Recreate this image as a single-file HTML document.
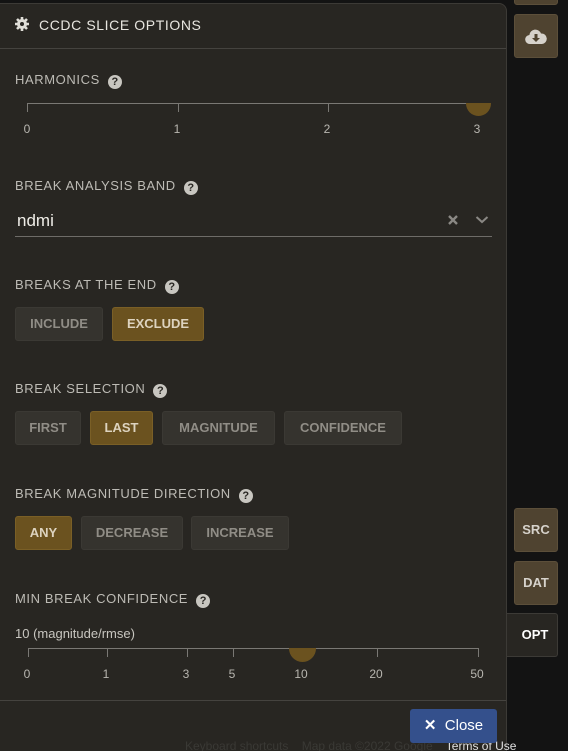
<!DOCTYPE html>
<html><head><meta charset="utf-8"><style>
*{margin:0;padding:0;box-sizing:border-box}
html,body{width:568px;height:751px;overflow:hidden}
body{background:#131313;font-family:"Liberation Sans",sans-serif;position:relative}
.panel{position:absolute;left:-2px;top:3px;width:509px;height:760px;background:#282622;border:1px solid #3c3a36;border-radius:0 8px 0 0}
.abs{position:absolute}
.lbl{position:absolute;left:15px;font-size:13px;color:#bdbbb5;letter-spacing:.6px;white-space:nowrap}
.q{display:inline-block;width:14px;height:14px;border-radius:50%;background:#c8c6c0;color:#282622;font-size:11px;font-weight:bold;text-align:center;line-height:14px;margin-left:8px;vertical-align:-1px;letter-spacing:0}
.btn{position:absolute;height:34px;background:#35332e;border:1px solid #3b3934;border-radius:3px;color:#908d86;font-size:13px;font-weight:bold;text-align:center;line-height:32px}
.sel{background:#6b521f;border-color:#7a5f26;color:#ddd3bf}
.tick{position:absolute;width:1px;height:9px;background:#7a7874}
.tl{position:absolute;font-size:12px;color:#b8b6b0;transform:translateX(-50%)}
.side{position:absolute;background:#4f4330;border:1px solid #5c4f3a;border-radius:3px;color:#d6d2cb;font-weight:bold;font-size:13px;text-align:center}
</style></head><body>
<div class="side" style="left:514px;top:-6px;width:44px;height:11px"></div>
<div class="side" style="left:514px;top:14px;width:44px;height:44px">
<svg width="22" height="18" viewBox="0 0 22 18" style="margin-top:13px"><path d="M5 16a4.5 4.5 0 0 1-.6-9A6 6 0 0 1 16 5.5a5 5 0 0 1 1 10.5z" fill="#d6d2cb"/><path d="M9.5 6h3v4h2.5l-4 4-4-4h2.5z" fill="#4f4330"/></svg></div>
<div class="side" style="left:514px;top:508px;width:44px;height:44px;line-height:42px">SRC</div>
<div class="side" style="left:514px;top:561px;width:44px;height:44px;line-height:42px">DAT</div>
<div class="abs" style="left:505px;top:613px;width:53px;height:44px;background:#282622;border:1px solid #3c3a36;border-left:none;border-radius:0 3px 3px 0;color:#fff;font-weight:bold;font-size:13px;line-height:42px;text-align:center;padding-left:8px">OPT</div>
<div class="panel"></div>
<div class="abs" style="left:185px;top:739px;font-size:12px;color:#3a3935;white-space:nowrap;z-index:2">Keyboard shortcuts &nbsp;&nbsp; Map data ©2022 Google &nbsp;&nbsp; <span style="color:#e0e0e0">Terms of Use</span></div>
<svg class="abs" style="left:15px;top:17px" width="14" height="14" viewBox="0 0 14 14"><g fill="#e0ded8"><circle cx="7" cy="7" r="5"/><g stroke="#e0ded8" stroke-width="2.6"><path d="M7 0v14M0 7h14M2 2l10 10M12 2L2 12"/></g></g><circle cx="7" cy="7" r="2" fill="#282622"/></svg>
<div class="abs" style="left:39px;top:17px;font-size:14px;color:#e8e6e0;letter-spacing:.6px">CCDC SLICE OPTIONS</div>
<div class="abs" style="left:0;top:48px;width:506px;height:1px;background:#45433f"></div>

<div class="lbl" style="top:72px">HARMONICS<span class="q">?</span></div>
<div class="abs" style="left:27px;top:103px;width:452px;height:1px;background:#7a7874"></div>
<div class="tick" style="left:27px;top:103px"></div><div class="tick" style="left:178px;top:103px"></div><div class="tick" style="left:328px;top:103px"></div>
<div class="abs" style="left:466px;top:103px;width:25px;height:13px;background:#6b521f;border-radius:0 0 13px 13px"></div>
<div class="tl" style="left:27px;top:122px">0</div><div class="tl" style="left:177px;top:122px">1</div><div class="tl" style="left:327px;top:122px">2</div><div class="tl" style="left:477px;top:122px">3</div>

<div class="lbl" style="top:178px">BREAK ANALYSIS BAND<span class="q">?</span></div>
<div class="abs" style="left:17px;top:211px;font-size:17px;color:#f0eee8">ndmi</div>
<svg class="abs" style="left:447px;top:214px" width="12" height="12"><path d="M2 2l8 8M10 2l-8 8" stroke="#8a8884" stroke-width="2.4"/></svg>
<svg class="abs" style="left:475px;top:215px" width="14" height="10"><path d="M1.5 2l5.5 5 5.5-5" stroke="#8a8884" stroke-width="2" fill="none"/></svg>
<div class="abs" style="left:15px;top:236px;width:477px;height:1px;background:#6e6c68"></div>

<div class="lbl" style="top:277px">BREAKS AT THE END<span class="q">?</span></div>
<div class="btn" style="left:15px;top:307px;width:88px">INCLUDE</div>
<div class="btn sel" style="left:112px;top:307px;width:92px">EXCLUDE</div>

<div class="lbl" style="top:381px">BREAK SELECTION<span class="q">?</span></div>
<div class="btn" style="left:15px;top:411px;width:66px">FIRST</div>
<div class="btn sel" style="left:90px;top:411px;width:63px">LAST</div>
<div class="btn" style="left:162px;top:411px;width:113px">MAGNITUDE</div>
<div class="btn" style="left:284px;top:411px;width:118px">CONFIDENCE</div>

<div class="lbl" style="top:486px">BREAK MAGNITUDE DIRECTION<span class="q">?</span></div>
<div class="btn sel" style="left:15px;top:516px;width:57px">ANY</div>
<div class="btn" style="left:81px;top:516px;width:102px">DECREASE</div>
<div class="btn" style="left:191px;top:516px;width:98px">INCREASE</div>

<div class="lbl" style="top:591px">MIN BREAK CONFIDENCE<span class="q">?</span></div>
<div class="abs" style="left:15px;top:626px;font-size:13px;color:#c8c6c0">10 (magnitude/rmse)</div>
<div class="abs" style="left:28px;top:648px;width:451px;height:1px;background:#7a7874"></div>
<div class="tick" style="left:28px;top:648px"></div><div class="tick" style="left:107px;top:648px"></div><div class="tick" style="left:187px;top:648px"></div><div class="tick" style="left:233px;top:648px"></div><div class="tick" style="left:377px;top:648px"></div><div class="tick" style="left:478px;top:648px"></div>
<div class="abs" style="left:289px;top:648px;width:27px;height:14px;background:#6b521f;border-radius:0 0 14px 14px"></div>
<div class="tl" style="left:27px;top:667px">0</div><div class="tl" style="left:106px;top:667px">1</div><div class="tl" style="left:186px;top:667px">3</div><div class="tl" style="left:232px;top:667px">5</div><div class="tl" style="left:301px;top:667px">10</div><div class="tl" style="left:376px;top:667px">20</div><div class="tl" style="left:477px;top:667px">50</div>

<div class="abs" style="left:0;top:700px;width:506px;height:1px;background:#45433f"></div>
<div class="abs" style="left:410px;top:709px;width:87px;height:34px;background:#34508c;border-radius:3px;color:#fff;font-size:15px;line-height:34px;text-align:center;z-index:3"><b style="font-size:15px">✕</b>&nbsp; Close</div>
</body></html>
